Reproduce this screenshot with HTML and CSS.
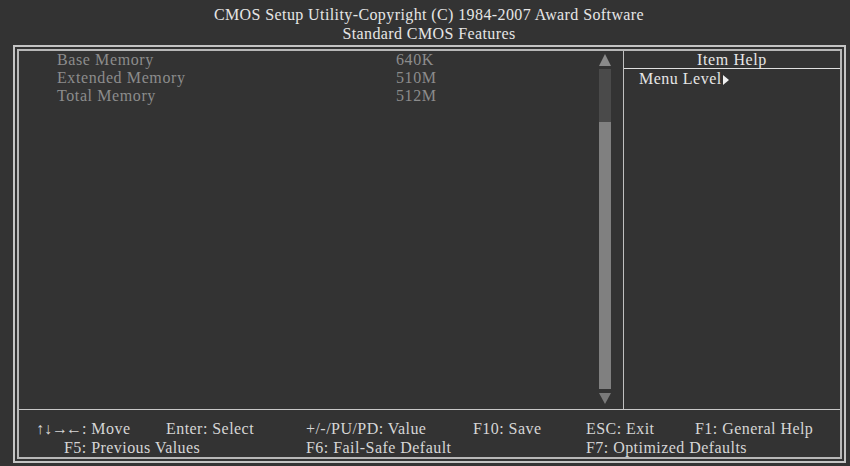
FILE: index.html
```html
<!DOCTYPE html>
<html lang="en">
<head>
  <meta charset="UTF-8">
  <title>Standard CMOS Features</title>
  <link rel="stylesheet" href="styles.css">
</head>
<body>

<div class="title">
  <div>CMOS Setup Utility-Copyright (C) 1984-2007 Award Software</div>
  <div>Standard CMOS Features</div>
</div>

<div class="frame">
  <div class="inner">
    <div class="main">
      <div class="menu">
        <div class="items">
          <div class="row"><span class="label">Base Memory</span><span class="value">640K</span></div>
          <div class="row"><span class="label">Extended Memory</span><span class="value">510M</span></div>
          <div class="row"><span class="label">Total Memory</span><span class="value">512M</span></div>
        </div>
        <div class="scrollbar">
          <div class="arrow up"></div>
          <div class="track">
            <div class="track-dark"></div>
            <div class="thumb"></div>
          </div>
          <div class="arrow down"></div>
        </div>
      </div>
      <div class="help">
        <div class="help-title">Item Help</div>
        <div class="help-text">Menu Level<svg class="caret" width="6" height="10" viewBox="0 0 6 10"><path d="M0 0 L6 5 L0 10 Z" fill="#f0f0f0"/></svg></div>
      </div>
    </div>
    <div class="keys">
      <span><span class="arrows">&uarr;&darr;</span><span class="arrows-h">&rarr;&larr;</span>: Move</span>
      <span>Enter: Select</span>
      <span>+/-/PU/PD: Value</span>
      <span>F10: Save</span>
      <span>ESC: Exit</span>
      <span>F1: General Help</span>
      <span class="k-f5">F5: Previous Values</span>
      <span class="k-f6">F6: Fail-Safe Default</span>
      <span class="k-f7">F7: Optimized Defaults</span>
    </div>
  </div>
</div>

</body>
</html>
```

FILE: styles.css
```css
body {
  margin: 0;
  background-color: #333333;
  font-family: "Liberation Serif", "Times New Roman", serif;
  font-size: 16px;
  color: #e6e6e6;
}
.title {
  height: 45px;
  padding-top: 5px;
  padding-left: 8px;
  box-sizing: border-box;
  text-align: center;
  line-height: 19px;
  letter-spacing: 0.4px;
}
.frame {
  margin-left: 13px;
  width: 833px;
  height: 418px;
  box-sizing: border-box;
  border: 2px solid #c4c4c4;
  padding: 2px;
}
.inner {
  height: 100%;
  box-sizing: border-box;
  border: 2px solid #b8b8b8;
  display: flex;
  flex-direction: column;
}
.main {
  flex: 1;
  display: flex;
  border-bottom: 1px solid #c8c8c8;
}
.menu {
  width: 604px;
  display: flex;
  border-right: 1px solid #c0c0c0;
}
.items {
  flex: 1;
}
.row {
  display: flex;
  line-height: 18px;
  color: #8c8c8c;
  letter-spacing: 0.6px;
}
.label {
  width: 339px;
  padding-left: 38px;
}
.scrollbar {
  width: 12px;
  margin-right: 12px;
  padding: 3px 0 5px;
  display: flex;
  flex-direction: column;
}
.arrow {
  width: 0;
  height: 0;
  border-left: 6px solid transparent;
  border-right: 6px solid transparent;
}
.arrow.up {
  border-bottom: 12px solid #8a8a8a;
  margin-bottom: 3px;
}
.arrow.down {
  border-top: 11px solid #7a7a7a;
  margin-top: 4px;
}
.track {
  flex: 1;
  display: flex;
  flex-direction: column;
}
.track-dark {
  height: 53px;
  background-color: #4a4a4a;
}
.thumb {
  flex: 1;
  background-color: #808080;
}
.help {
  flex: 1;
}
.help-title {
  text-align: center;
  line-height: 17px;
  border-bottom: 1px solid #e0e0e0;
  letter-spacing: 0.6px;
}
.help-text {
  padding-left: 15px;
  line-height: 19px;
  letter-spacing: 0.5px;
}
.caret {
  margin-left: 1px;
  vertical-align: -1px;
}
.keys {
  height: 47px;
  box-sizing: border-box;
  padding-top: 9px;
  display: grid;
  grid-template-columns: 130px 140px 167px 113px 109px 1fr;
  padding-left: 17px;
  line-height: 19px;
  color: #d6d6d6;
  letter-spacing: 0.45px;
}
.arrows {
  letter-spacing: 0;
}
.arrows-h {
  letter-spacing: -2px;
  margin-right: 2px;
}
.k-f5 {
  grid-column: 1 / 3;
  padding-left: 28px;
}
.k-f6 {
  grid-column: 3 / 5;
}
.k-f7 {
  grid-column: 5 / 7;
}
```
